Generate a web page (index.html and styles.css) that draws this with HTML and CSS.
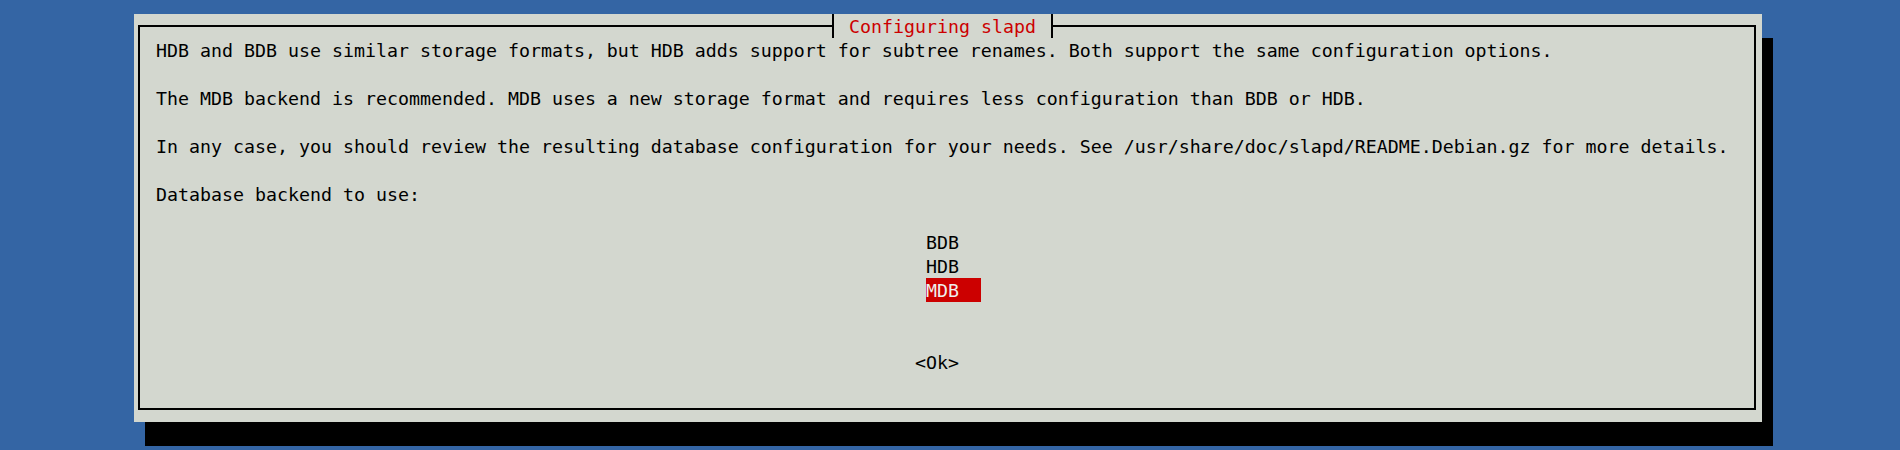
FILE: index.html
```html
<!DOCTYPE html>
<html>
<head>
<meta charset="utf-8">
<link rel="stylesheet" href="styles.css">
</head>
<body>
<div class="dialog">
  <div class="frame">
    <p class="line">HDB and BDB use similar storage formats, but HDB adds support for subtree renames. Both support the same configuration options.</p>
    <p class="line">The MDB backend is recommended. MDB uses a new storage format and requires less configuration than BDB or HDB.</p>
    <p class="line">In any case, you should review the resulting database configuration for your needs. See /usr/share/doc/slapd/README.Debian.gz for more details.</p>
    <p class="line">Database backend to use:</p>
    <ul class="menu">
      <li class="item">BDB</li>
      <li class="item">HDB</li>
      <li class="item selected">MDB</li>
    </ul>
    <div class="buttons"><span class="button">&lt;Ok&gt;</span></div>
  </div>
  <div class="title">Configuring slapd</div>
</div>
</body>
</html>
```
FILE: styles.css
```css
html, body {
  margin: 0;
  height: 450px;
  overflow: hidden;
}
body {
  background: #3465a4;
  padding: 14px 0 0 134px;
  box-sizing: border-box;
  font-family: "DejaVu Sans Mono", monospace;
  font-size: 18.27px;
  line-height: 24px;
  color: #000;
}
.dialog {
  position: relative;
  width: 1628px;
  height: 408px;
  background: #d3d7cf;
  box-shadow: 11px 24px 0 #000;
  padding: 11px 6px 12px 4px;
  box-sizing: border-box;
}
.frame {
  height: 385px;
  border: 2px solid #000;
  box-sizing: border-box;
  padding: 11px 0 0 16px;
}
.line {
  margin: 0 0 23px;
  padding-top: 1px;
  white-space: pre;
}
.menu {
  list-style: none;
  margin: 0 0 48px 770px;
  padding: 0;
}
.item {
  width: 55px;
  height: 24px;
  box-sizing: border-box;
  padding-top: 1px;
  line-height: 23px;
  white-space: pre;
}
.selected {
  background: #cc0000;
  color: #eeeeec;
}
.buttons {
  padding: 1px 0 0 759px;
}
.title {
  position: absolute;
  top: 0;
  left: 698px;
  width: 221px;
  height: 24px;
  box-sizing: border-box;
  padding-top: 1px;
  line-height: 23px;
  border-left: 2px solid #000;
  border-right: 2px solid #000;
  background: #d3d7cf;
  color: #cc0000;
  text-align: center;
  white-space: pre;
}
```
